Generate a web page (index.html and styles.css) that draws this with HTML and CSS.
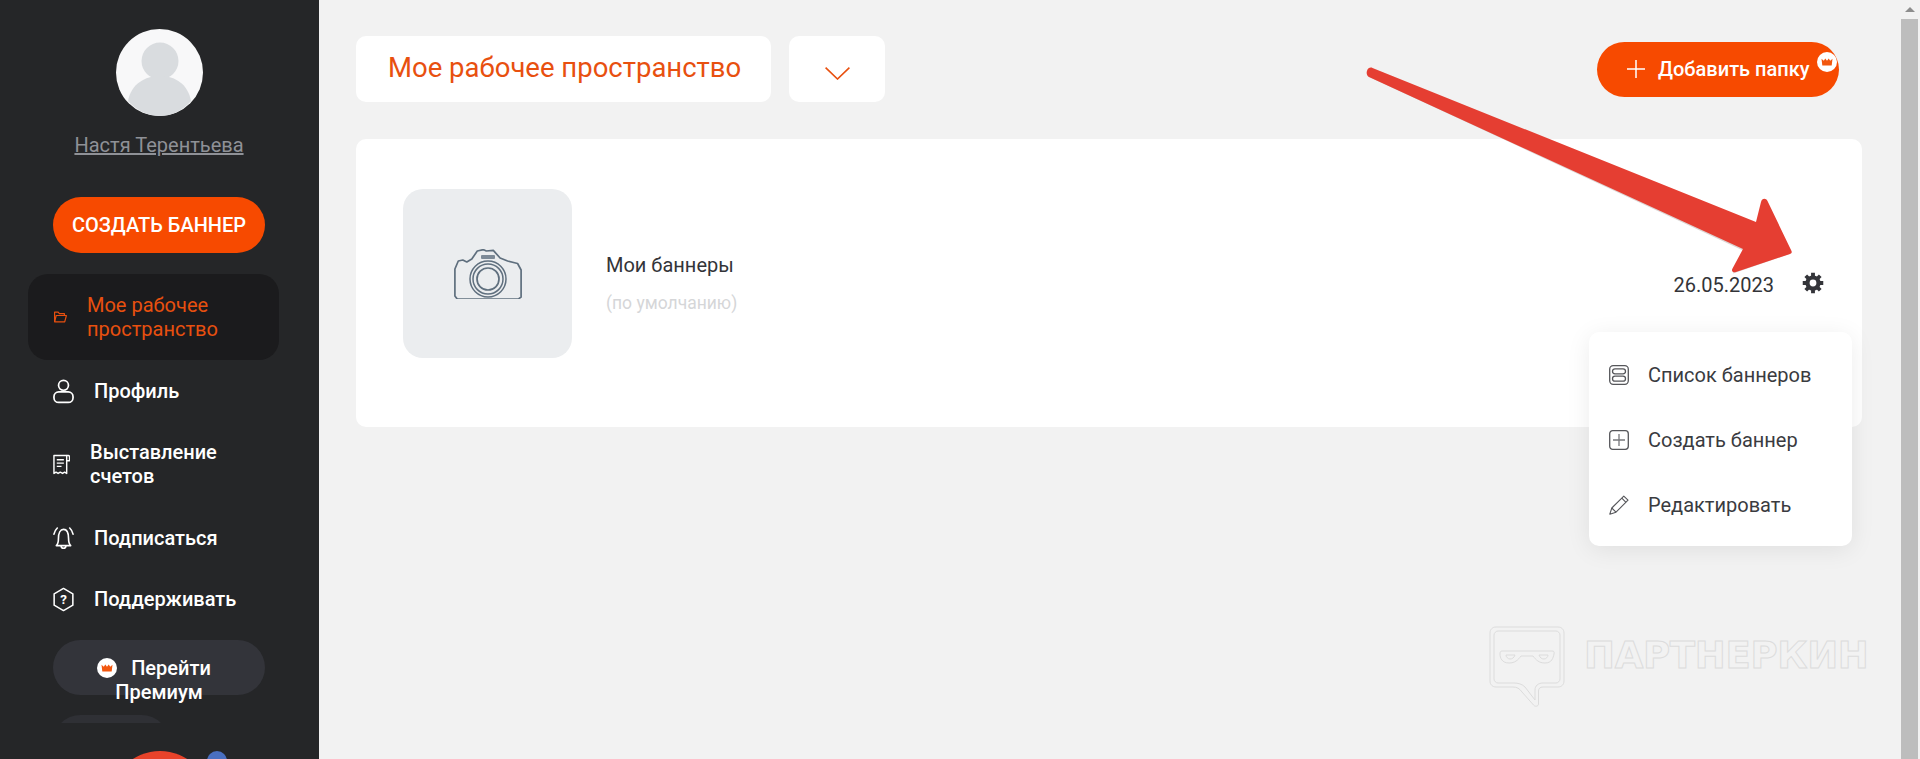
FILE: index.html
```html
<!DOCTYPE html>
<html lang="en">
<head>
  <meta charset="UTF-8" />
  <meta name="viewport" content="width=device-width, initial-scale=1.0" />
  <title>Мое рабочее пространство</title>
  <link rel="stylesheet" href="styles.css">
</head>
<body>
  <aside class="sidebar">
    <div class="side-top">
      <div class="avatar">
        <svg viewBox="0 0 87 87" width="87" height="87">
          <circle cx="43.5" cy="43.5" r="43.5" fill="#f8f8f9"/>
          <circle cx="44" cy="32" r="18.5" fill="#d9dcdf"/>
          <path d="M12 72c3-17 17-25 32-25s28 8 31 25c-8 9-19 15-31 15s-24-6-32-15z" fill="#d9dcdf"/>
        </svg>
      </div>
      <a class="user-name" href="#">Настя Терентьева</a>
      <button class="create-btn">СОЗДАТЬ БАННЕР</button>

      <nav class="nav-list">
        <a class="nav-item active" href="#">
          <svg class="ico-folder" viewBox="0 0 14 12" fill="none" stroke="#e8500f" stroke-width="1.2" stroke-linejoin="round">
            <path d="M1.6 10.8V1.2h3.6l1.2 1.5h5v1.8"/>
            <path d="M1.6 10.8l1.6-6.3h10.2l-1.7 6.3z"/>
          </svg>
          <span>Мое рабочее пространство</span>
        </a>
        <a class="nav-item" href="#">
          <svg class="ico-wide" viewBox="0 0 22 25" fill="none" stroke="#fff" stroke-width="1.8">
            <circle cx="11" cy="6" r="5.2"/>
            <rect x="1" y="13" width="20" height="11" rx="5"/>
          </svg>
          <span>Профиль</span>
        </a>
        <a class="nav-item invoice" href="#">
          <svg class="ico-bill" viewBox="0 0 18 22" fill="none" stroke="#fff" stroke-width="1.5" stroke-linejoin="round">
            <path d="M1 20.5V1.5h13.5v19l-2.2-1.4-2.2 1.4-2.4-1.4-2.3 1.4-2.2-1.4z"/>
            <path d="M14.5 1.5h1.7c.8 0 1.3.6 1.3 1.3v4.2h-3"/>
            <path d="M4 6h7.5M4 9.5h7.5M4 13h5"/>
          </svg>
          <span>Выставление счетов</span>
        </a>
        <a class="nav-item" href="#">
          <svg class="ico-wide" viewBox="0 0 22 25" fill="none" stroke="#fff" stroke-width="1.7" stroke-linecap="round" stroke-linejoin="round">
            <path d="M3.500 20c1.500-1.500 2.200-3.500 2.200-7.500 0-6 2-9.500 5.300-9.500s5.300 3.500 5.300 9.500c0 4 .7 6 2.200 7.500z"/>
            <path d="M8.500 20.300c0 3.200 5 3.200 5 0"/>
            <path d="M1 8c.5-2.500 1.700-4.800 3.500-6.500M21 8c-.5-2.500-1.700-4.800-3.500-6.500"/>
          </svg>
          <span>Подписаться</span>
        </a>
        <a class="nav-item support" href="#">
          <svg class="ico-wide" viewBox="0 0 22 25" fill="none" stroke="#fff" stroke-width="1.6" stroke-linejoin="round">
            <path d="M11 .9l9.800 5.700v11.800L11 24.100 1.200 18.400V6.600z"/>
            <text x="11" y="17.500" class="hex-mark">?</text>
          </svg>
          <span>Поддерживать</span>
        </a>
      </nav>

      <button class="premium-btn">
        <svg class="crown" viewBox="0 0 20 20">
          <circle cx="10" cy="10" r="10" fill="#fff"/>
          <path d="M4.500 6.800l2.300 2 1.500-2.200L10 8.800l1.700-2.200 1.500 2.200 2.300-2-.8 6.700h-9.400z" fill="#f2570f"/>
        </svg>
        Перейти Премиум
      </button>
      <div class="ghost-pill"></div>
    </div>
    <div class="side-bottom">
      <div class="chat-round"></div>
      <div class="chat-dot"></div>
    </div>
  </aside>

  <main class="main">
    <div class="top-row">
      <div class="title-box">Мое рабочее пространство</div>
      <div class="chevron-box">
        <svg viewBox="0 0 25 13" width="25" height="13" fill="none" stroke="#e8500f" stroke-width="1.6">
          <path d="M.6.6l11.900 11.400L24.400.6"/>
        </svg>
      </div>
      <button class="add-btn">
        <svg viewBox="0 0 18 18" width="18" height="18" stroke="#fff" stroke-width="1.5">
          <path d="M9 0v18M0 9h18"/>
        </svg>
        Добавить папку
        <svg class="crown badge" viewBox="0 0 20 20">
          <circle cx="10" cy="10" r="10" fill="#fff"/>
          <path d="M4.500 6.800l2.300 2 1.500-2.200L10 8.800l1.700-2.200 1.500 2.200 2.300-2-.8 6.700h-9.400z" fill="#f2570f"/>
        </svg>
      </button>
    </div>

    <section class="card">
      <div class="thumb">
        <svg viewBox="0 0 68 50" width="68" height="50" fill="none" stroke="#5f6f7e">
          <path stroke-width="1.700" stroke-linejoin="round" d="M.9 47V20l3.400-8 4.500-1 4 2 5-3 5.500-8 6-1.400 3 1.400 7-.6 6.800 7.600 7.500 3 10 2.500 3.500 6.500v27l-2.800 2.100H3.300z"/>
          <rect x="27" y="6" width="14" height="4" rx="1" fill="#7d8a97" stroke="none"/>
          <circle cx="34" cy="30" r="18" stroke-width="1.500"/>
          <circle cx="34" cy="30" r="15" stroke-width="1.500"/>
          <circle cx="34" cy="30" r="11" stroke-width="1.700"/>
        </svg>
      </div>
      <div class="card-info">
        <div class="card-name">Мои баннеры</div>
        <div class="card-note">(по умолчанию)</div>
      </div>
      <div class="card-meta">
        <span class="card-date">26.05.2023</span>
        <svg class="gear" viewBox="0 0 24 24" width="22" height="22" fill="none" stroke="#34353a">
          <path stroke-width="4.200" d="M12 .8v22.400M.8 12h22.400M4.100 4.100l15.800 15.800M19.900 4.100L4.100 19.900"/>
          <circle cx="12" cy="12" r="6" stroke-width="4.600" fill="#fff"/>
        </svg>
      </div>

      <div class="drop-menu">
        <a class="drop-item" href="#">
          <svg viewBox="0 0 20 20" width="20" height="20" fill="none" stroke="#55565a" stroke-width="1.300">
            <rect x=".7" y=".7" width="18.600" height="18.600" rx="3.500"/>
            <rect x="3.500" y="3.800" width="13" height="5" rx="2.500"/>
            <rect x="3.500" y="11.200" width="13" height="5" rx="2.500"/>
          </svg>
          Список баннеров
        </a>
        <a class="drop-item" href="#">
          <svg viewBox="0 0 20 20" width="20" height="20" fill="none" stroke="#55565a" stroke-width="1.300">
            <rect x=".7" y=".7" width="18.600" height="18.600" rx="3"/>
            <path d="M10 4v12M4 10h12" stroke="#77787c"/>
          </svg>
          Создать баннер
        </a>
        <a class="drop-item" href="#">
          <svg viewBox="0 0 20 20" width="20" height="20" fill="none" stroke="#55565a" stroke-width="1.100" stroke-linejoin="round">
            <path d="M.8 19.200l2-6.200L14.800 1.200l4.200 4-12 12z"/>
            <path d="M2.800 13l4.200 4.200M12.800 3.200l4.200 4.200"/>
          </svg>
          Редактировать
        </a>
      </div>
    </section>
  </main>

  <div class="scrollbar">
    <div class="scroll-arrow"></div>
    <div class="scroll-thumb"></div>
  </div>

  <!-- arrow drawn on top of the screenshot -->
  <svg class="big-arrow" viewBox="0 0 440 220" width="440" height="220">
    <path d="M8 10L396 162l7-23 28 53-58 20 10-23L8 15z" fill="#b9a9a6" opacity=".5" transform="translate(0 1.500)"/>
    <path d="M7.500 9.500c1-1.500 3-2.500 5-1.500L396 162l5-20c1-4 5-4 6.500-1l24 50c.6 1.500 0 2.500-1.500 3l-54 18c-3 1-5-1-3.500-3.500L383 189 9 17c-2.500-1.500-3-4.500-1.500-7.500z" fill="#e53e32"/>
  </svg>

  <div class="watermark">
    <svg viewBox="0 0 76 81" width="76" height="81" fill="none" stroke="#dcdcdc" stroke-width="1">
      <path d="M7 1h62c3.500 0 6 2.500 6 6v48c0 3.500-2.500 6-6 6H54c-3 0-4.500 1.500-4.500 4v13c0 2.500-3.500 3-5 1L33 66c-2.500-3.500-5-5-9-5H7c-3.500 0-6-2.500-6-6V7c0-3.500 2.500-6 6-6z"/>
      <path d="M9 5h58c2 0 4 2 4 4v44c0 2-2 4-4 4H54c-5 0-8 3-8 7v10L36 61c-3-3-7-4-11-4H9c-2 0-4-2-4-4V9c0-2 2-4 4-4z"/>
      <path d="M13 25h50c2 0 2.500 1 2 3-1 4-2 9-9 9-6 0-9-3-12-7H32c-3 4-6 7-12 7-7 0-9-5-9-9 0-2 .5-3 2-3z"/>
      <path d="M17 29h9c-1 3-3 4-5 4-2 0-4-2-4-4zM50 29h9c0 2-2 4-4 4-2 0-4-1-5-4z"/>
    </svg>
    <span class="watermark-text">ПАРТНЕРКИН</span>
  </div>
</body>
</html>
```

FILE: styles.css
```css
* { box-sizing: border-box; }
html, body { margin: 0; padding: 0; height: 759px; overflow: hidden; }
body { display: flex; position: relative; font-family: Roboto, "Noto Sans", sans-serif; font-size: 20px; line-height: 24px; background: #f2f2f2; color: #333438; }
a { text-decoration: none; color: inherit; }
button { font-family: inherit; border: none; cursor: pointer; }

/* sidebar */
.sidebar { width: 319px; flex-shrink: 0; height: 759px; overflow: hidden; background: #252628; }
.side-top { height: 723px; overflow: hidden; display: flex; flex-direction: column; align-items: center; padding: 29px 1px 0 0; }
.avatar { width: 87px; height: 87px; flex-shrink: 0; }
.avatar svg { display: block; }
.user-name { margin-top: 17px; color: #8f9197; text-decoration: underline; }
.create-btn { margin-top: 40px; width: 212px; height: 56px; flex-shrink: 0; border-radius: 28px; background: #f74a00; color: #fff; font-size: 20px; font-weight: 500; }

.nav-list { margin: 21px 11px 0 0; width: 251px; flex-shrink: 0; }
.nav-item { display: flex; align-items: center; gap: 20px; padding: 19px 25px; color: #fff; font-weight: 500; }
.nav-item.active { background: #1b1b1d; border-radius: 20px; color: #e8500f; font-weight: 400; }
.nav-item.invoice { margin-top: -1px; }
.nav-item.support { margin-top: -1px; }
.nav-item svg { flex-shrink: 0; margin: -1px 0; }
.ico-folder { width: 14px; height: 12px; }
.ico-wide { width: 21px; height: 25px; }
.ico-bill { width: 17px; height: 21px; }
.hex-mark { fill: #fff; stroke: none; font-family: Roboto, sans-serif; font-size: 14px; font-weight: 700; text-anchor: middle; }

.premium-btn { display: block; margin-top: 10px; width: 212px; height: 55px; flex-shrink: 0; padding: 16px 30px 0; border-radius: 28px; background: #33343a; color: #fff; font-size: 20px; font-weight: 500; line-height: 24px; text-align: center; overflow: visible; }
.crown { width: 20px; height: 20px; vertical-align: -3px; margin: 0 9px 0 -10px; }
.ghost-pill { margin-top: 20px; margin-right: 96px; width: 116px; height: 55px; flex-shrink: 0; border-radius: 28px; background: #2f3035; }

.side-bottom { position: relative; height: 36px; }
.chat-round { position: absolute; left: 110px; top: 28px; width: 100px; height: 100px; border-radius: 50%; background: #e8432a; }
.chat-dot { position: absolute; left: 207px; top: 28px; width: 20px; height: 20px; border-radius: 50%; background: #4a6fc0; }

/* main */
.main { flex: 1; min-width: 0; padding: 36px 39px 0 37px; }
.top-row { display: flex; align-items: center; gap: 18px; }
.title-box { width: 415px; height: 66px; border-radius: 10px; background: #fff; padding-left: 32px; color: #e8500f; font-size: 27.5px; line-height: 64px; }
.chevron-box { width: 96px; height: 66px; border-radius: 10px; background: #fff; display: flex; align-items: center; justify-content: center; padding-top: 8px; }
.add-btn { position: relative; margin-left: auto; margin-right: 23px; width: 242px; height: 55px; border-radius: 28px; background: #f74a00; color: #fff; font-size: 20px; font-weight: 500; display: flex; align-items: center; gap: 13px; padding-left: 30px; }
.crown.badge { position: absolute; right: 2px; top: 10px; margin: 0; }

.card { position: relative; margin-top: 37px; height: 288px; border-radius: 10px; background: #fff; display: flex; align-items: center; padding: 0 38px 0 47px; }
.thumb { align-self: flex-start; margin-top: 50px; width: 169px; height: 169px; border-radius: 20px; background: #ebedef; display: flex; align-items: center; justify-content: center; }
.card-info { margin: 2px 0 0 34px; }
.card-name { color: #333438; }
.card-note { margin-top: 14px; color: #d5d6d8; font-size: 17.5px; }
.card-meta { margin-left: auto; margin-top: 3px; display: flex; align-items: center; gap: 28px; }
.card-date { color: #333438; }
.gear { margin-top: -3px; }

.drop-menu { position: absolute; top: 193px; right: 10px; width: 263px; height: 214px; padding: 10px 0; border-radius: 10px; background: #fff; box-shadow: 0 4px 24px rgba(0,0,0,0.08); }
.drop-item { display: flex; align-items: center; gap: 19px; height: 65px; padding-left: 20px; color: #3a3b3f; }
.drop-item svg { flex-shrink: 0; }

/* scrollbar strip */
.scrollbar { width: 17px; flex-shrink: 0; padding-top: 7px; margin-right: 2px; }
.scroll-arrow { margin: 0 auto; width: 0; height: 0; border-left: 5px solid transparent; border-right: 5px solid transparent; border-bottom: 5px solid #8d8d8d; }
.scroll-thumb { margin-top: 7px; height: 740px; background: #bdbdbd; }

/* overlays */
.big-arrow { position: absolute; left: 1360px; top: 60px; }
.watermark { position: absolute; left: 1489px; top: 626px; display: flex; gap: 19px; }
.watermark-text { margin-top: 10px; font-family: "DejaVu Sans", sans-serif; font-size: 37px; font-weight: 700; line-height: 40px; letter-spacing: -0.3px; color: #f2f2f2; -webkit-text-stroke: 1px #dcdcdc; }
```
